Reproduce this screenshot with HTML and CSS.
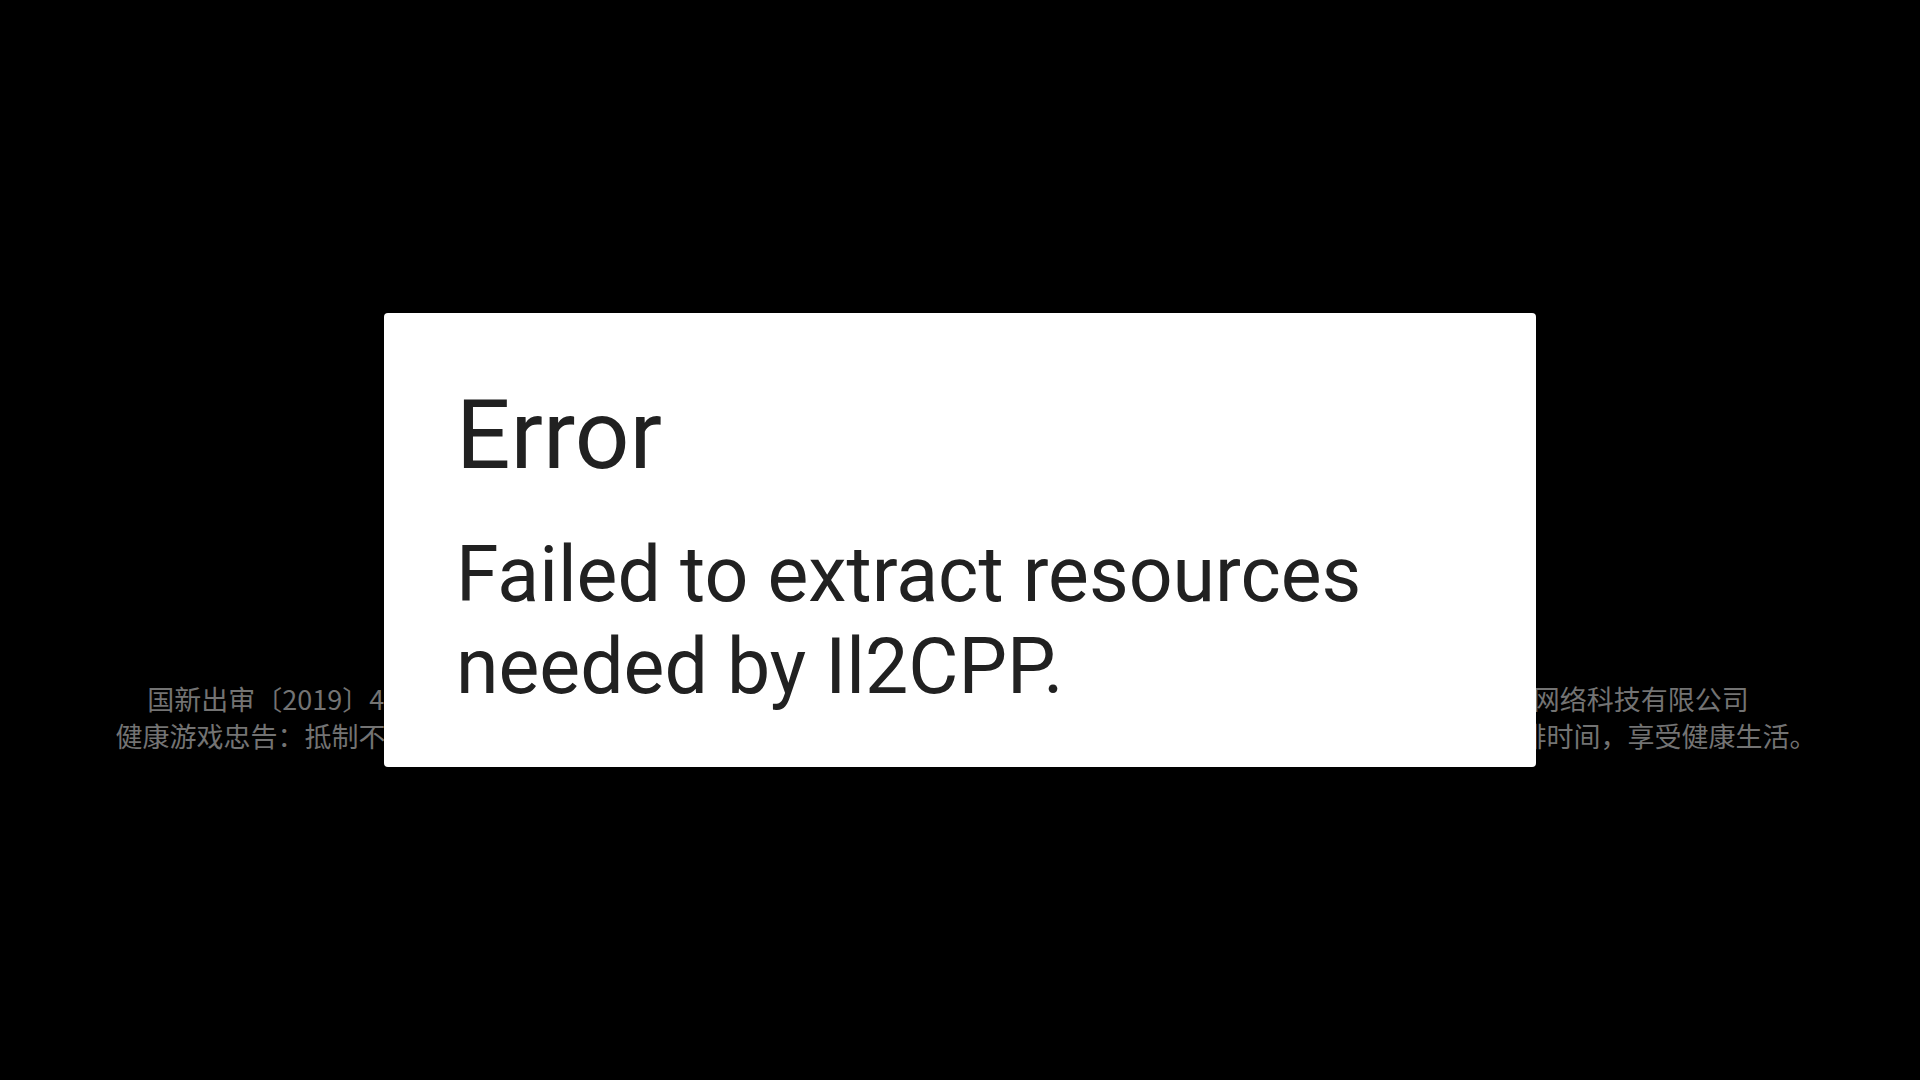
FILE: index.html
```html
<!DOCTYPE html>
<html lang="zh-CN">
<head>
<meta charset="utf-8">
<title>Error</title>
<link rel="stylesheet" href="styles.css">
</head>
<body>
<div class="stage">
  <div class="notice">
    <p class="notice-line line-one">国新出审〔2019〕4125号 ISBN 978-7-498-0736612-4 出版单位：北京伯通电子出版社有限公司 著作权人：上海游戏网络科技有限公司</p>
    <p class="notice-line line-two">健康游戏忠告：抵制不良游戏，拒绝盗版游戏。注意自我保护，谨防受骗上当。适度游戏益脑，沉迷游戏伤身。合理安排时间，享受健康生活。</p>
  </div>
</div>
<div class="dialog" role="alertdialog">
  <h1 class="dialog-title">Error</h1>
  <p class="dialog-message">Failed to extract resources needed by Il2CPP.</p>
</div>
</body>
</html>
```
FILE: styles.css
```css
html, body {
  margin: 0;
  padding: 0;
  background: #000000;
}
body {
  width: 1920px;
  height: 1080px;
  overflow: hidden;
}
.stage {
  height: 1080px;
  box-sizing: border-box;
  padding-top: 680px;
  display: flex;
  flex-direction: column;
  align-items: center;
}
.notice {
  display: flex;
  flex-direction: column;
  align-items: center;
}
.notice-line {
  margin: 0;
  font-family: "Noto Sans CJK SC", "Noto Sans", sans-serif;
  font-size: 27px;
  line-height: 37px;
  color: #737373;
  white-space: nowrap;
}
.line-one {
  padding-right: 24px;
}
.line-two {
  padding-left: 12px;
}
.dialog {
  position: fixed;
  left: 50%;
  top: 50%;
  transform: translate(-50%, -50%);
  width: 1152px;
  box-sizing: border-box;
  padding: 66px 72px 54px 72px;
  background: #ffffff;
  border-radius: 4px;
  font-family: Roboto, "Liberation Sans", sans-serif;
  color: #212121;
}
.dialog-title {
  margin: 0;
  font-size: 96px;
  font-weight: 400;
  line-height: normal;
}
.dialog-message {
  margin: 38px 0 0 0;
  font-size: 77px;
  line-height: 92px;
  width: 920px;
}
```
